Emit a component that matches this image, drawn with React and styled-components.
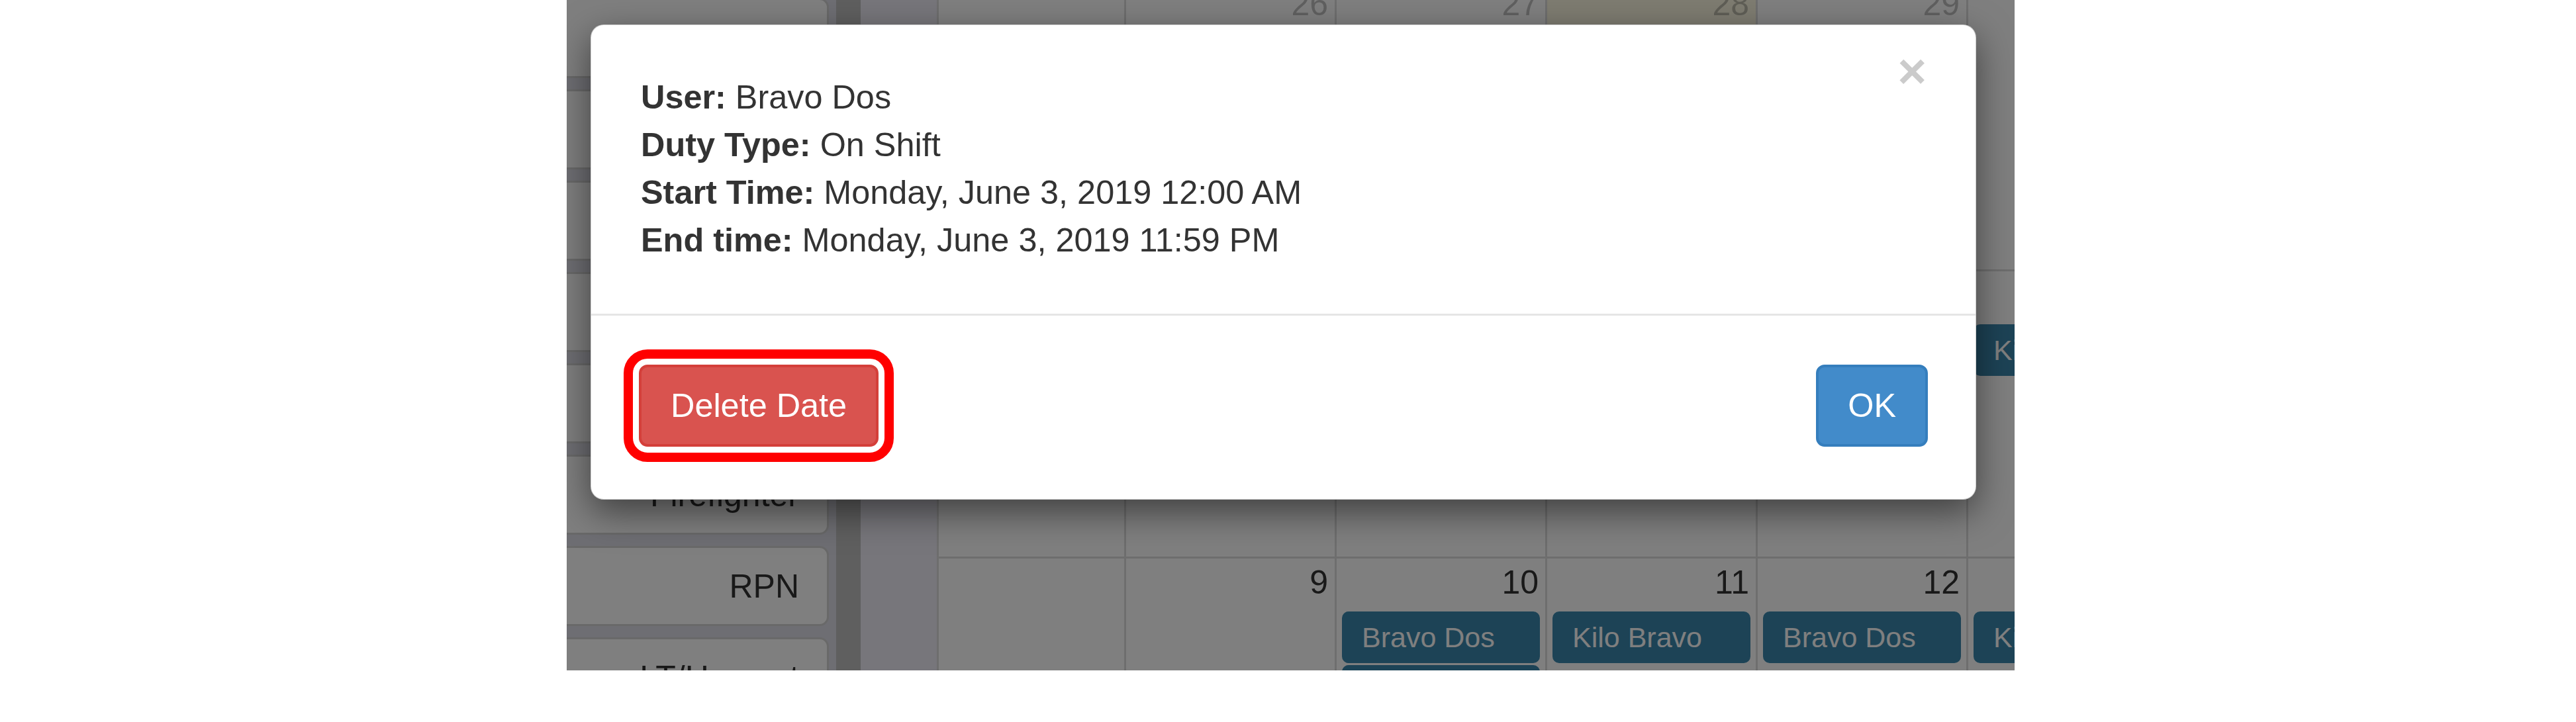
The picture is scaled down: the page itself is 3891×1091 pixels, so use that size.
import React from "react";
import styled, { createGlobalStyle } from "styled-components";

const GlobalStyle = createGlobalStyle`
  html, body { margin: 0; padding: 0; background: #ffffff; }
  body { font-family: "Liberation Sans", Arial, sans-serif; }
  * { box-sizing: border-box; }
`;

const Page = styled.div`
  width: 3891px;
  height: 1091px;
  padding-left: 856px;
  background: #ffffff;
`;

const Shot = styled.div`
  position: relative;
  width: 2187px;
  height: 1013px;
  overflow: hidden;
  display: flex;
  background: #ffffff;
`;

const Sidebar = styled.div`
  width: 407px;
  flex: none;
  background: #dcdce6;
  display: flex;
  flex-direction: column;
  gap: 17px;
  margin-top: -3px;
  padding-right: 11px;
`;

const RoleButton = styled.div`
  flex: none;
  height: 121px;
  margin-left: -30px;
  background: #ffffff;
  border: 3px solid #d2d2d2;
  border-radius: 14px;
  display: flex;
  align-items: center;
  justify-content: flex-end;
  padding-right: 42px;
  font-size: 50px;
  color: #333333;
`;

const Strip = styled.div`
  width: 37px;
  flex: none;
  background: #bebebe;
`;

const Gutter = styled.div`
  width: 115px;
  flex: none;
  background: #eeecf6;
`;

const Calendar = styled.div`
  flex: 1;
  overflow: hidden;
  margin-top: -30px;
  display: flex;
  flex-direction: column;
  background: #ffffff;
`;

const Week = styled.div`
  display: grid;
  grid-template-columns: 283px repeat(6, 318px);
  height: ${(p) => p.$height}px;
  flex: none;
  border-top: ${(p) => (p.$first ? 0 : 3)}px solid #dddddd;
`;

const Day = styled.div`
  border-left: 3px solid #dddddd;
  background: ${(p) => (p.$today ? "#fcf8e3" : "#ffffff")};
  display: flex;
  flex-direction: column;
`;

const DayNum = styled.div`
  text-align: right;
  padding-right: 10px;
  font-size: 50px;
  line-height: 72px;
  height: 72px;
  color: ${(p) => (p.$other ? "rgba(51,51,51,0.3)" : "#333333")};
`;

const Event = styled.div`
  margin: 8px 8px 0 8px;
  & + & { margin-top: 3px; }
  height: 78px;
  background: #3a87ad;
  border: 3px solid #3a87ad;
  border-radius: 10px;
  color: #ffffff;
  font-size: 43px;
  line-height: 72px;
  padding: 0 27px;
  white-space: nowrap;
  overflow: hidden;
`;

const Overlay = styled.div`
  position: absolute;
  inset: 0;
  background: rgba(0, 0, 0, 0.5);
`;

const Modal = styled.div`
  position: absolute;
  left: 36px;
  top: 37px;
  width: 2093px;
  background: #ffffff;
  border: 1px solid rgba(0, 0, 0, 0.2);
  border-radius: 20px;
  box-shadow: 0 18px 54px rgba(0, 0, 0, 0.5);
  color: #333333;
`;

const Body = styled.div`
  padding: 73px 74px 75px 75px;
  font-size: 50.4px;
  line-height: 72px;
`;

const Close = styled.span`
  float: right;
  margin-top: -41px;
  font-size: 75px;
  font-weight: 700;
  line-height: 1;
  color: #000000;
  opacity: 0.2;
  text-shadow: 0 3px 0 #ffffff;
  cursor: pointer;
`;

const Line = styled.div`
  white-space: nowrap;
`;

const Label = styled.b`
  font-weight: 700;
`;

const Footer = styled.div`
  border-top: 3px solid #e5e5e5;
  padding: 74px 72px 79px 72px;
  display: flex;
  justify-content: space-between;
  align-items: center;
`;

const Button = styled.button`
  font-family: "Liberation Sans", Arial, sans-serif;
  font-size: 50.4px;
  line-height: 72px;
  padding: 22px 44px;
  border: 4px solid ${(p) => (p.$variant === "danger" ? "#d43f3a" : "#357ebd")};
  background: ${(p) => (p.$variant === "danger" ? "#d9534f" : "#428bca")};
  color: #ffffff;
  border-radius: 13px;
  cursor: pointer;
  outline: ${(p) => (p.$marked ? "14px solid #ff0000" : "none")};
  outline-offset: 9px;
`;

const roles = ["Captain", "Lieutenant", "Engineer", "Paramedic", "EMT", "Firefighter", "RPN", "LT/Hazmat"];

const weeks = [
  {
    height: 437,
    days: [
      { n: "", other: true },
      { n: "26", other: true },
      { n: "27", other: true },
      { n: "28", other: true, today: true },
      { n: "29", other: true },
      { n: "30", other: true },
      { n: "31", other: true },
    ],
  },
  {
    height: 434,
    days: [
      { n: "" },
      { n: "2" },
      { n: "3", events: ["Bravo Dos"] },
      { n: "4", events: ["Kilo Bravo"] },
      { n: "5", events: ["Bravo Dos"] },
      { n: "6", events: ["Kilo Bravo"] },
      { n: "7" },
    ],
  },
  {
    height: 400,
    days: [
      { n: "" },
      { n: "9" },
      { n: "10", events: ["Bravo Dos", "Kilo Bravo"] },
      { n: "11", events: ["Kilo Bravo"] },
      { n: "12", events: ["Bravo Dos"] },
      { n: "13", events: ["Kilo Bravo"] },
      { n: "14" },
    ],
  },
];

function WeekRow({ days, height, first }) {
  return (
    <Week $height={height} $first={first}>
      {days.map((d, i) => (
        <Day key={i} $today={d.today}>
          <DayNum $other={d.other}>{d.n}</DayNum>
          {(d.events || []).map((e, j) => (
            <Event key={j}>{e}</Event>
          ))}
        </Day>
      ))}
    </Week>
  );
}

export default function App() {
  return (
    <Page>
      <GlobalStyle />
      <Shot>
        <Sidebar>
          {roles.map((r) => (
            <RoleButton key={r}>{r}</RoleButton>
          ))}
        </Sidebar>
        <Strip />
        <Gutter />
        <Calendar>
          {weeks.map((w, i) => (
            <WeekRow key={i} days={w.days} height={w.height} first={i === 0} />
          ))}
        </Calendar>
        <Overlay />
        <Modal>
          <Body>
            <Close>×</Close>
            <Line>
              <Label>User:</Label> Bravo Dos
            </Line>
            <Line>
              <Label>Duty Type:</Label> On Shift
            </Line>
            <Line>
              <Label>Start Time:</Label> Monday, June 3, 2019 12:00 AM
            </Line>
            <Line>
              <Label>End time:</Label> Monday, June 3, 2019 11:59 PM
            </Line>
          </Body>
          <Footer>
            <Button $variant="danger" $marked>
              Delete Date
            </Button>
            <Button $variant="primary">OK</Button>
          </Footer>
        </Modal>
      </Shot>
    </Page>
  );
}
